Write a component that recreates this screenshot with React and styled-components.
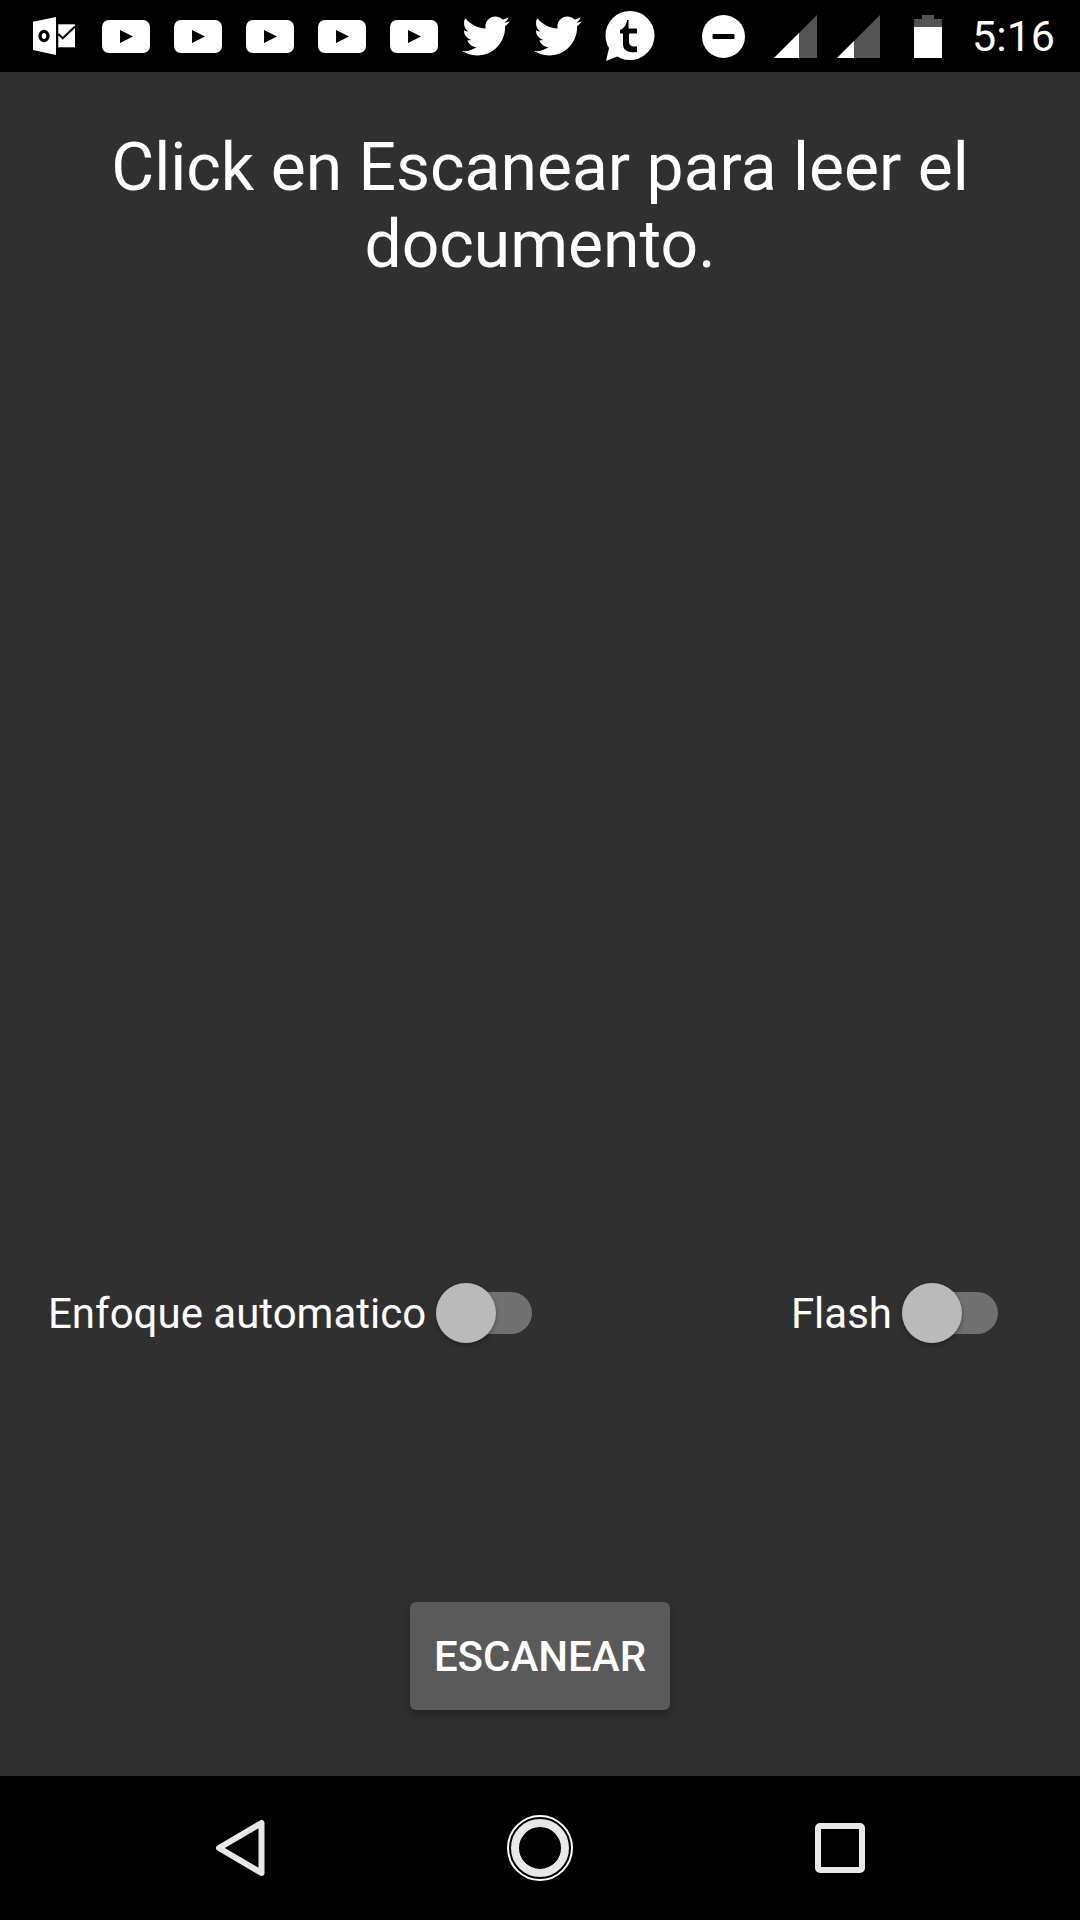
import React from 'react';
import styled, { createGlobalStyle } from 'styled-components';
import { FaTwitter } from 'react-icons/fa';

const GlobalStyle = createGlobalStyle`
  html, body {
    margin: 0;
    padding: 0;
    background-color: #000;
  }
`;

const Screen = styled.div`
  width: 1080px;
  height: 1920px;
  display: flex;
  flex-direction: column;
  background-color: #303030;
  color: #fff;
  font-family: Roboto, 'Liberation Sans', sans-serif;
  overflow: hidden;
`;

const StatusBar = styled.div`
  height: 72px;
  flex-shrink: 0;
  display: flex;
  align-items: center;
  justify-content: space-between;
  padding: 0 25px 0 18px;
  background-color: #000;
`;

const Notifications = styled.div`
  display: flex;
  align-items: center;
`;

const NotificationSlot = styled.div`
  width: 72px;
  height: 72px;
  display: flex;
  align-items: center;
  justify-content: center;
  color: #fff;
`;

const SystemIcons = styled.div`
  display: flex;
  align-items: center;
`;

const SystemSlot = styled.div`
  display: flex;
  align-items: center;
  margin-left: ${({ $gap }) => `${$gap}px`};
`;

const Clock = styled.span`
  margin-left: 30px;
  font-size: 43px;
  line-height: 72px;
  color: #fff;
`;

const Main = styled.main`
  flex: 1;
  display: flex;
  flex-direction: column;
`;

const Title = styled.h1`
  margin: 0;
  padding: 57px 60px 0;
  font-size: 66px;
  font-weight: 400;
  line-height: 77px;
  text-align: center;
`;

const OptionsRow = styled.div`
  display: flex;
  align-items: center;
  justify-content: space-between;
  height: 60px;
  margin-top: auto;
  padding: 0 82px 0 48px;
`;

const Option = styled.label`
  display: flex;
  align-items: center;
  gap: 10px;
  font-size: 42px;
`;

const Track = styled.span`
  position: relative;
  display: block;
  width: 96px;
  height: 42px;
  border-radius: 21px;
  background-color: #717171;
`;

const Thumb = styled.span`
  position: absolute;
  top: -9px;
  left: 0;
  width: 60px;
  height: 60px;
  border-radius: 50%;
  background-color: #bababa;
  box-shadow: 0 2px 5px rgba(0, 0, 0, 0.35);
`;

const ButtonRow = styled.div`
  display: flex;
  justify-content: center;
  margin-top: 259px;
  padding-bottom: 66px;
`;

const ScanButton = styled.button`
  width: 260px;
  height: 108px;
  padding: 0;
  border: none;
  border-radius: 6px;
  background-color: #5a5a5b;
  color: #fff;
  font-family: inherit;
  font-size: 42px;
  font-weight: 500;
  box-shadow: 0 4px 8px rgba(0, 0, 0, 0.3);
`;

const NavBar = styled.nav`
  height: 144px;
  flex-shrink: 0;
  display: grid;
  grid-template-columns: repeat(3, 300px);
  justify-content: center;
  justify-items: center;
  align-items: center;
  background-color: #000;
`;

const OutlookIcon = () => (
  <svg width="42" height="38" viewBox="0 0 42 38">
    <path d="M0 4.7 L23 0 V38 L0 33 Z" fill="#fff" />
    <ellipse cx="11" cy="19" rx="3.9" ry="4.6" fill="none" stroke="#000" strokeWidth="3.4" />
    <path d="M25.3 7.3 H42 V30.3 H25.3 Z" fill="#fff" />
    <path d="M25.3 17 L29.7 21.3 L42 9.5" fill="none" stroke="#000" strokeWidth="2" />
  </svg>
);

const YoutubeIcon = () => (
  <svg width="48" height="33" viewBox="0 0 48 33">
    <rect width="48" height="33" rx="7" fill="#fff" />
    <path d="M18 10 L31 16.5 L18 23 Z" fill="#000" />
  </svg>
);

const TumblrIcon = () => (
  <svg width="50" height="50" viewBox="0 0 50 50">
    <circle cx="25" cy="24.5" r="24.5" fill="#fff" />
    <path d="M1 50 L5 33 L16 44 Z" fill="#fff" />
    <path
      d="M23.5 9 V17.5 H32 V22.5 H24 V31 C24 34.5 27 36 32 35.5 V41 C24 42 18 40 18 33 V22.5 H15 V19 C19 17.5 21.5 14 22 9 Z"
      fill="#000"
    />
  </svg>
);

const DndIcon = () => (
  <svg width="43" height="43" viewBox="0 0 43 43">
    <circle cx="21.5" cy="21.5" r="21.5" fill="#fff" />
    <rect x="10.5" y="19" width="22" height="5" rx="1" fill="#000" />
  </svg>
);

const SignalIcon = ({ level }) => (
  <svg width="43" height="43" viewBox="0 0 43 43">
    <path d="M0 43 L43 0 V43 Z" fill="#545454" />
    <path d={`M0 43 L${level} ${43 - level} V43 Z`} fill="#fff" />
  </svg>
);

const BatteryIcon = () => (
  <svg width="28" height="43" viewBox="0 0 28 43">
    <path d="M0 4 H8 V0 H20 V4 H28 V12 H0 Z" fill="#545454" />
    <rect y="12" width="28" height="31" fill="#fff" />
  </svg>
);

const BackIcon = () => (
  <svg width="52" height="60" viewBox="0 0 52 60">
    <path
      d="M47.5 5 V55 L5 30 Z"
      fill="none"
      stroke="#e8e8e8"
      strokeWidth="6"
      strokeLinejoin="round"
    />
  </svg>
);

const HomeIcon = () => (
  <svg width="66" height="66" viewBox="0 0 66 66">
    <circle cx="33" cy="33" r="32" fill="none" stroke="#fff" strokeWidth="2" />
    <circle cx="33" cy="33" r="25" fill="none" stroke="#e8e8e8" strokeWidth="8" />
  </svg>
);

const RecentsIcon = () => (
  <svg width="50" height="50" viewBox="0 0 50 50">
    <rect x="3" y="3" width="44" height="44" rx="2" fill="none" stroke="#e8e8e8" strokeWidth="6" />
  </svg>
);

const notifications = [
  <OutlookIcon />,
  <YoutubeIcon />,
  <YoutubeIcon />,
  <YoutubeIcon />,
  <YoutubeIcon />,
  <YoutubeIcon />,
  <FaTwitter size={48} />,
  <FaTwitter size={48} />,
  <TumblrIcon />,
];

const Toggle = ({ label }) => (
  <Option>
    {label}
    <Track>
      <Thumb />
    </Track>
  </Option>
);

export default function App() {
  return (
    <Screen>
      <GlobalStyle />
      <StatusBar>
        <Notifications>
          {notifications.map((icon, i) => (
            <NotificationSlot key={i}>{icon}</NotificationSlot>
          ))}
        </Notifications>
        <SystemIcons>
          <SystemSlot $gap={0}><DndIcon /></SystemSlot>
          <SystemSlot $gap={29}><SignalIcon level={25} /></SystemSlot>
          <SystemSlot $gap={20}><SignalIcon level={17} /></SystemSlot>
          <SystemSlot $gap={34}><BatteryIcon /></SystemSlot>
          <Clock>5:16</Clock>
        </SystemIcons>
      </StatusBar>
      <Main>
        <Title>Click en Escanear para leer el documento.</Title>
        <OptionsRow>
          <Toggle label="Enfoque automatico" />
          <Toggle label="Flash" />
        </OptionsRow>
        <ButtonRow>
          <ScanButton>ESCANEAR</ScanButton>
        </ButtonRow>
      </Main>
      <NavBar>
        <BackIcon />
        <HomeIcon />
        <RecentsIcon />
      </NavBar>
    </Screen>
  );
}
